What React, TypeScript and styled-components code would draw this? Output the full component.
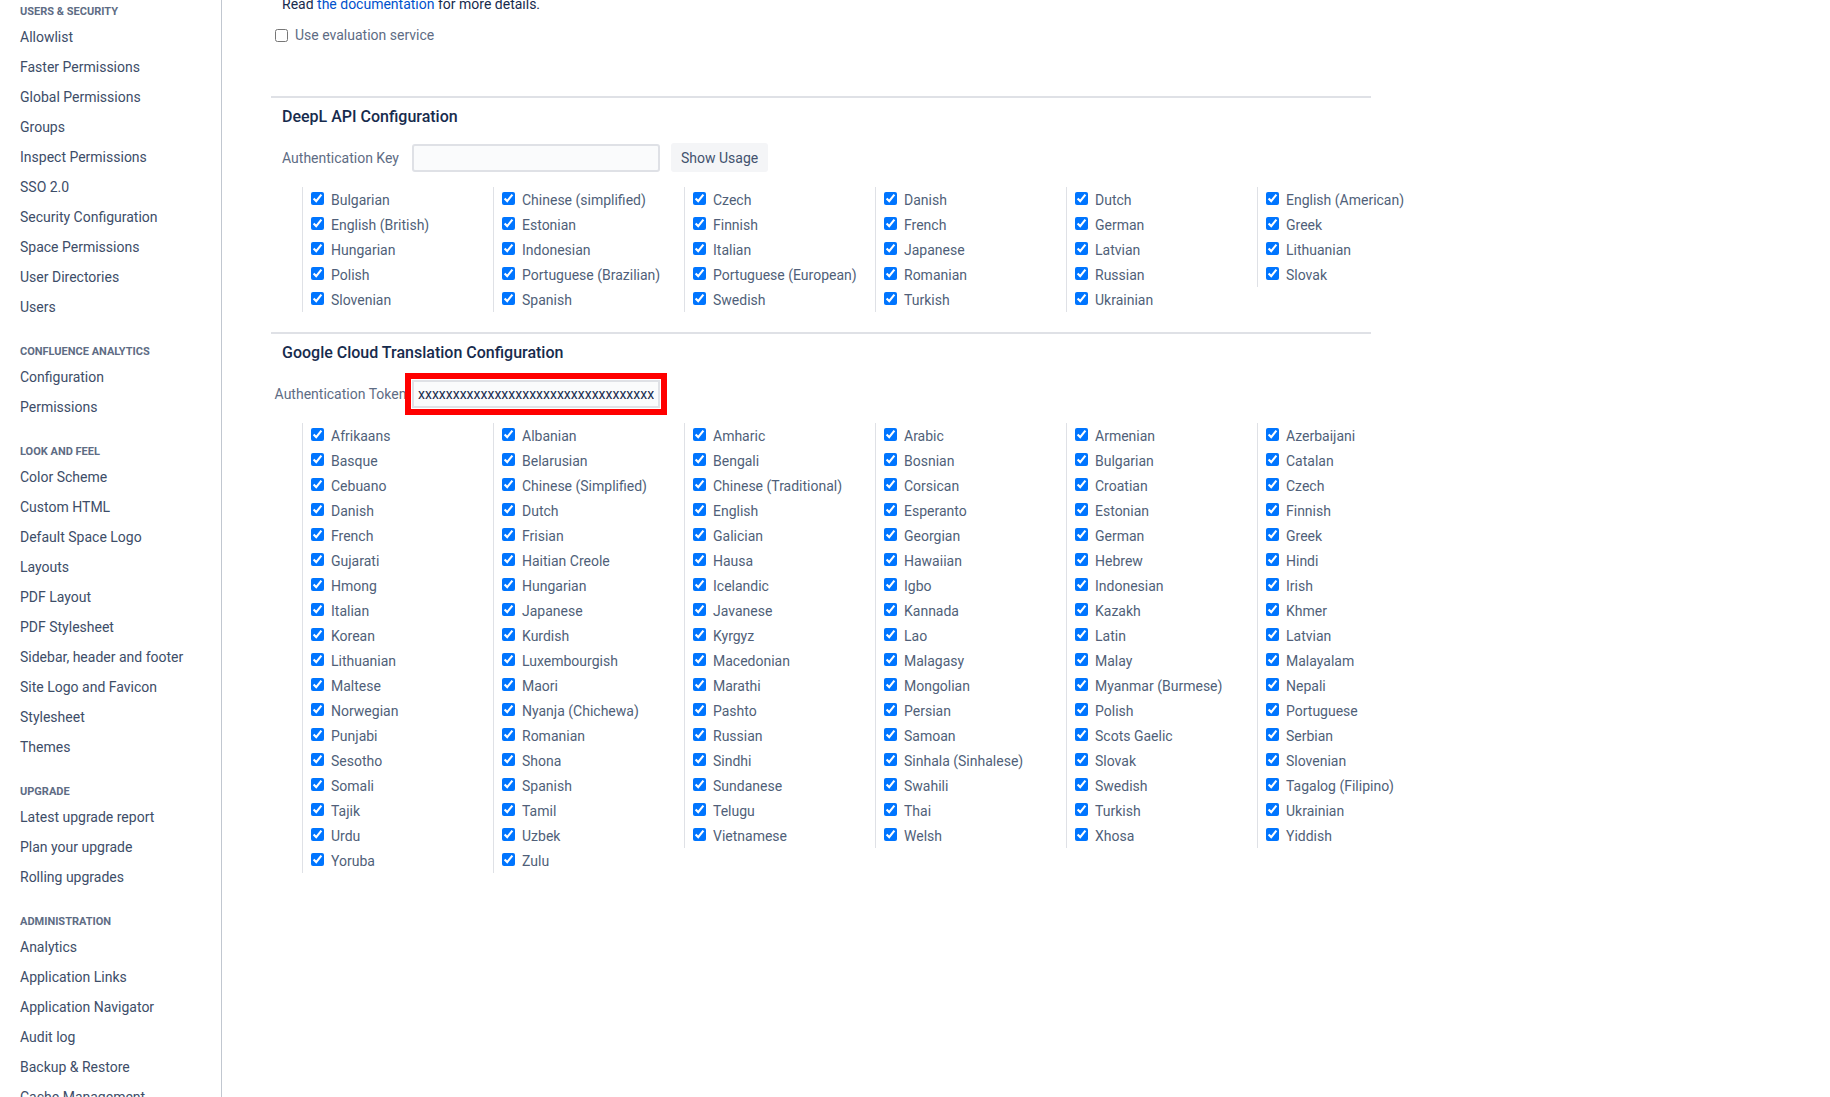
import styled, { createGlobalStyle } from "styled-components";

const GlobalStyle = createGlobalStyle`
  body {
    margin: 0;
    background: #ffffff;
    font-family: Roboto, "Liberation Sans", sans-serif;
  }
`;

const navGroups = [
  {
    title: "Users & Security",
    items: [
      "Allowlist",
      "Faster Permissions",
      "Global Permissions",
      "Groups",
      "Inspect Permissions",
      "SSO 2.0",
      "Security Configuration",
      "Space Permissions",
      "User Directories",
      "Users",
    ],
  },
  { title: "Confluence Analytics", items: ["Configuration", "Permissions"] },
  {
    title: "Look and Feel",
    items: [
      "Color Scheme",
      "Custom HTML",
      "Default Space Logo",
      "Layouts",
      "PDF Layout",
      "PDF Stylesheet",
      "Sidebar, header and footer",
      "Site Logo and Favicon",
      "Stylesheet",
      "Themes",
    ],
  },
  {
    title: "Upgrade",
    items: ["Latest upgrade report", "Plan your upgrade", "Rolling upgrades"],
  },
  {
    title: "Administration",
    items: [
      "Analytics",
      "Application Links",
      "Application Navigator",
      "Audit log",
      "Backup & Restore",
      "Cache Management",
    ],
  },
];

const deeplLanguages = [
  "Bulgarian", "Chinese (simplified)", "Czech", "Danish", "Dutch", "English (American)",
  "English (British)", "Estonian", "Finnish", "French", "German", "Greek",
  "Hungarian", "Indonesian", "Italian", "Japanese", "Latvian", "Lithuanian",
  "Polish", "Portuguese (Brazilian)", "Portuguese (European)", "Romanian", "Russian", "Slovak",
  "Slovenian", "Spanish", "Swedish", "Turkish", "Ukrainian",
];

const googleLanguages = [
  "Afrikaans", "Albanian", "Amharic", "Arabic", "Armenian", "Azerbaijani",
  "Basque", "Belarusian", "Bengali", "Bosnian", "Bulgarian", "Catalan",
  "Cebuano", "Chinese (Simplified)", "Chinese (Traditional)", "Corsican", "Croatian", "Czech",
  "Danish", "Dutch", "English", "Esperanto", "Estonian", "Finnish",
  "French", "Frisian", "Galician", "Georgian", "German", "Greek",
  "Gujarati", "Haitian Creole", "Hausa", "Hawaiian", "Hebrew", "Hindi",
  "Hmong", "Hungarian", "Icelandic", "Igbo", "Indonesian", "Irish",
  "Italian", "Japanese", "Javanese", "Kannada", "Kazakh", "Khmer",
  "Korean", "Kurdish", "Kyrgyz", "Lao", "Latin", "Latvian",
  "Lithuanian", "Luxembourgish", "Macedonian", "Malagasy", "Malay", "Malayalam",
  "Maltese", "Maori", "Marathi", "Mongolian", "Myanmar (Burmese)", "Nepali",
  "Norwegian", "Nyanja (Chichewa)", "Pashto", "Persian", "Polish", "Portuguese",
  "Punjabi", "Romanian", "Russian", "Samoan", "Scots Gaelic", "Serbian",
  "Sesotho", "Shona", "Sindhi", "Sinhala (Sinhalese)", "Slovak", "Slovenian",
  "Somali", "Spanish", "Sundanese", "Swahili", "Swedish", "Tagalog (Filipino)",
  "Tajik", "Tamil", "Telugu", "Thai", "Turkish", "Ukrainian",
  "Urdu", "Uzbek", "Vietnamese", "Welsh", "Xhosa", "Yiddish",
  "Yoruba", "Zulu",
];

const Page = styled.div`
  display: flex;
  height: 1097px;
  overflow: hidden;
`;

const Sidebar = styled.nav`
  flex-shrink: 0;
  width: 201px;
  padding-left: 20px;
  border-right: 1px solid #c1c7d0;
`;

const NavGroup = styled.div`
  margin-top: 20px;

  &:first-child {
    margin-top: 2px;
  }
`;

const NavTitle = styled.div`
  font-size: 11px;
  font-weight: 700;
  line-height: 20px;
  text-transform: uppercase;
  color: #5e6c84;
`;

const NavItem = styled.div`
  font-size: 14px;
  line-height: 30px;
  color: #3d4d68;
  white-space: nowrap;
`;

const Main = styled.main`
  margin-left: 49px;
  width: 1100px;
`;

const Intro = styled.p`
  margin: -6px 0 0;
  padding-left: 11px;
  font-size: 14px;
  line-height: 20px;
  color: #172b4d;

  a {
    color: #0052cc;
    text-decoration: none;
  }
`;

const EvalRow = styled.label`
  display: flex;
  align-items: center;
  gap: 7px;
  margin-top: 11px;
  padding-left: 4px;
  height: 20px;
  font-size: 14px;
  color: #5e6c84;

  input {
    margin: 0;
  }
`;

const Section = styled.section`
  margin-top: 51px;
  border-top: 2px solid #dfe1e6;
  padding-top: 7px;
  padding-bottom: 20px;

  & + & {
    margin-top: 0;
  }
`;

const Heading = styled.h3`
  margin: 0;
  padding-left: 11px;
  font-size: 16px;
  font-weight: 500;
  line-height: 24px;
  color: #172b4d;
`;

const AuthRow = styled.div`
  display: flex;
  align-items: center;
  margin-top: 14px;
  height: 29px;
`;

const AuthLabel = styled.label`
  width: 139px;
  display: flex;
  justify-content: center;
  white-space: nowrap;
  font-size: 14px;
  color: #5e6c84;
`;

const TextInput = styled.input<{ $flagged?: boolean }>`
  box-sizing: border-box;
  margin-left: 2px;
  width: 248px;
  height: 28px;
  padding: 0 4px;
  border: 2px solid #dfe1e6;
  border-radius: ${(p) => (p.$flagged ? "0" : "3px")};
  background: #fafbfc;
  font-family: Roboto, "Liberation Sans", sans-serif;
  font-size: 14px;
  color: #172b4d;
  outline: ${(p) => (p.$flagged ? "6px solid #ff0000" : "none")};
  outline-offset: 1px;
`;

const Button = styled.button`
  margin-left: 11px;
  height: 29px;
  padding: 0 10px;
  border: none;
  border-radius: 3px;
  background: #f4f5f7;
  font-family: Roboto, "Liberation Sans", sans-serif;
  font-size: 14px;
  color: #42526e;
`;

const LangGrid = styled.div`
  display: grid;
  grid-template-columns: repeat(6, 191px);
  align-items: start;
  margin-top: 15px;
  padding-left: 31px;
`;

const LangColumn = styled.div`
  border-left: 1px solid #dfe1e6;
  padding-left: 8px;
`;

const LangItem = styled.label`
  display: flex;
  align-items: center;
  gap: 7px;
  height: 25px;
  font-size: 14px;
  color: #505f79;
  white-space: nowrap;

  input {
    margin: 0 0 2px;
  }
`;

function LanguageGrid({ languages }: { languages: string[] }) {
  const columns: string[][] = [[], [], [], [], [], []];
  languages.forEach((lang, i) => columns[i % 6].push(lang));

  return (
    <LangGrid>
      {columns.map((col, c) => (
        <LangColumn key={c}>
          {col.map((lang) => (
            <LangItem key={lang}>
              <input type="checkbox" defaultChecked />
              {lang}
            </LangItem>
          ))}
        </LangColumn>
      ))}
    </LangGrid>
  );
}

export default function App() {
  return (
    <>
      <GlobalStyle />
      <Page>
        <Sidebar>
          {navGroups.map((group) => (
            <NavGroup key={group.title}>
              <NavTitle>{group.title}</NavTitle>
              {group.items.map((item) => (
                <NavItem key={item}>{item}</NavItem>
              ))}
            </NavGroup>
          ))}
        </Sidebar>

        <Main>
          <Intro>
            Read <a href="#">the documentation</a> for more details.
          </Intro>
          <EvalRow>
            <input type="checkbox" />
            Use evaluation service
          </EvalRow>

          <Section>
            <Heading>DeepL API Configuration</Heading>
            <AuthRow>
              <AuthLabel>Authentication Key</AuthLabel>
              <TextInput type="text" />
              <Button>Show Usage</Button>
            </AuthRow>
            <LanguageGrid languages={deeplLanguages} />
          </Section>

          <Section>
            <Heading>Google Cloud Translation Configuration</Heading>
            <AuthRow>
              <AuthLabel>Authentication Token</AuthLabel>
              <TextInput
                type="text"
                $flagged
                defaultValue="xxxxxxxxxxxxxxxxxxxxxxxxxxxxxxxxxxxxxxxx"
              />
            </AuthRow>
            <LanguageGrid languages={googleLanguages} />
          </Section>
        </Main>
      </Page>
    </>
  );
}
